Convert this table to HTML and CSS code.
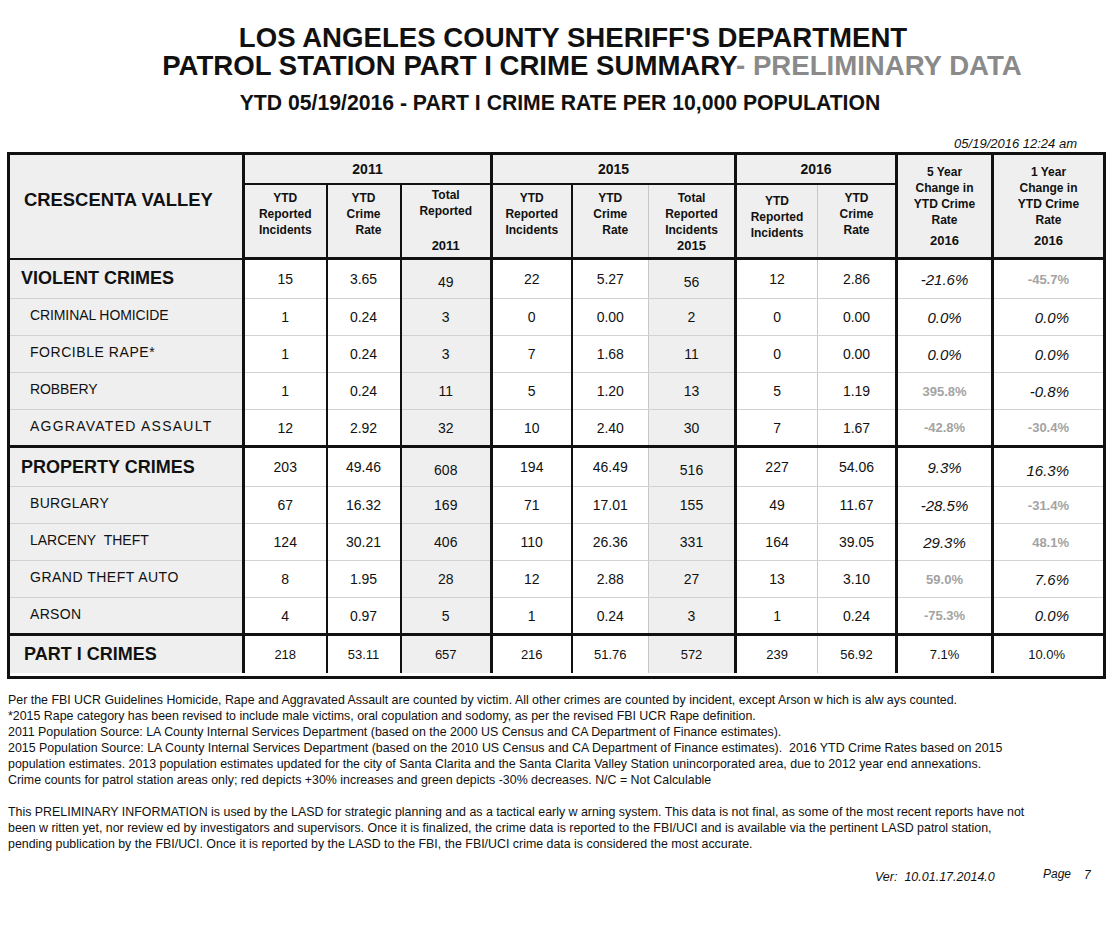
FILE: index.html
```html
<!DOCTYPE html>
<html>
<head>
<meta charset="utf-8">
<link rel="stylesheet" href="styles.css">
</head>
<body>
<div class="page">
  <div class="titles">
    <div class="t1">LOS ANGELES COUNTY SHERIFF'S DEPARTMENT</div>
    <div class="t2">PATROL STATION PART I CRIME SUMMARY<span class="prelim">- PRELIMINARY DATA</span></div>
    <div class="t3">YTD 05/19/2016 - PART I CRIME RATE PER 10,000 POPULATION</div>
  </div>
  <div class="stamp">05/19/2016 12:24 am</div>
  <table class="crime">
    <colgroup>
      <col class="c-label"><col class="c-a"><col class="c-b"><col class="c-c">
      <col class="c-d"><col class="c-e"><col class="c-f">
      <col class="c-g"><col class="c-h">
      <col class="c-i"><col class="c-j">
    </colgroup>
    <thead>
      <tr class="hr1">
        <th rowspan="2" class="station">CRESCENTA VALLEY</th>
        <th colspan="3" class="yr thick-r">2011</th>
        <th colspan="3" class="yr thick-r">2015</th>
        <th colspan="2" class="yr thick-r">2016</th>
        <th rowspan="2" class="chg thick-r"><span class="l">5 Year</span><span class="l">Change in</span><span class="l">YTD Crime</span><span class="l">Rate</span><span class="y">2016</span></th>
        <th rowspan="2" class="chg chg1"><span class="l">1 Year</span><span class="l">Change in</span><span class="l">YTD Crime</span><span class="l">Rate</span><span class="y">2016</span></th>
      </tr>
      <tr class="hr2">
        <th class="sub bl"><span class="l">YTD</span><span class="l">Reported</span><span class="l">Incidents</span></th>
        <th class="sub bl"><span class="l">YTD</span><span class="l">Crime</span><span class="l rt">Rate</span></th>
        <th class="sub tot thick-r"><span class="l">Total</span><span class="l">Reported</span><span class="y gap">2011</span></th>
        <th class="sub bl"><span class="l">YTD</span><span class="l">Reported</span><span class="l">Incidents</span></th>
        <th class="sub gl"><span class="l">YTD</span><span class="l">Crime</span><span class="l rt">Rate</span></th>
        <th class="sub tot2 thick-r"><span class="l">Total</span><span class="l">Reported</span><span class="l">Incidents</span><span class="y">2015</span></th>
        <th class="sub s16 gl"><span class="l">YTD</span><span class="l">Reported</span><span class="l">Incidents</span></th>
        <th class="sub thick-r"><span class="l">YTD</span><span class="l">Crime</span><span class="l">Rate</span></th>
      </tr>
    </thead>
    <tbody class="grp">
      <tr class="main">
        <td class="lbl big">VIOLENT CRIMES</td>
        <td class="n bl">15</td><td class="n bl">3.65</td><td class="n sh thick-r low">49</td>
        <td class="n bl">22</td><td class="n gl">5.27</td><td class="n sh thick-r low">56</td>
        <td class="n gl">12</td><td class="n thick-r">2.86</td>
        <td class="p thick-r">-21.6%</td><td class="p1 dim">-45.7%</td>
      </tr>
      <tr>
        <td class="lbl sm">CRIMINAL HOMICIDE</td>
        <td class="n bl">1</td><td class="n bl">0.24</td><td class="n sh thick-r">3</td>
        <td class="n bl">0</td><td class="n gl">0.00</td><td class="n sh thick-r">2</td>
        <td class="n gl">0</td><td class="n thick-r">0.00</td>
        <td class="p thick-r">0.0%</td><td class="p1">0.0%</td>
      </tr>
      <tr>
        <td class="lbl sm ls-rape">FORCIBLE RAPE*</td>
        <td class="n bl">1</td><td class="n bl">0.24</td><td class="n sh thick-r">3</td>
        <td class="n bl">7</td><td class="n gl">1.68</td><td class="n sh thick-r">11</td>
        <td class="n gl">0</td><td class="n thick-r">0.00</td>
        <td class="p thick-r">0.0%</td><td class="p1">0.0%</td>
      </tr>
      <tr>
        <td class="lbl sm">ROBBERY</td>
        <td class="n bl">1</td><td class="n bl">0.24</td><td class="n sh thick-r">11</td>
        <td class="n bl">5</td><td class="n gl">1.20</td><td class="n sh thick-r">13</td>
        <td class="n gl">5</td><td class="n thick-r">1.19</td>
        <td class="p thick-r dim">395.8%</td><td class="p1">-0.8%</td>
      </tr>
      <tr class="last">
        <td class="lbl sm ls-agg">AGGRAVATED ASSAULT</td>
        <td class="n bl">12</td><td class="n bl">2.92</td><td class="n sh thick-r">32</td>
        <td class="n bl">10</td><td class="n gl">2.40</td><td class="n sh thick-r">30</td>
        <td class="n gl">7</td><td class="n thick-r">1.67</td>
        <td class="p thick-r dim">-42.8%</td><td class="p1 dim">-30.4%</td>
      </tr>
    </tbody>
    <tbody class="grp">
      <tr class="main">
        <td class="lbl big">PROPERTY CRIMES</td>
        <td class="n bl">203</td><td class="n bl">49.46</td><td class="n sh thick-r low">608</td>
        <td class="n bl">194</td><td class="n gl">46.49</td><td class="n sh thick-r low">516</td>
        <td class="n gl">227</td><td class="n thick-r">54.06</td>
        <td class="p thick-r">9.3%</td><td class="p1 low">16.3%</td>
      </tr>
      <tr>
        <td class="lbl sm ls-burg">BURGLARY</td>
        <td class="n bl">67</td><td class="n bl">16.32</td><td class="n sh thick-r">169</td>
        <td class="n bl">71</td><td class="n gl">17.01</td><td class="n sh thick-r">155</td>
        <td class="n gl">49</td><td class="n thick-r">11.67</td>
        <td class="p thick-r">-28.5%</td><td class="p1 dim">-31.4%</td>
      </tr>
      <tr>
        <td class="lbl sm ls-lar">LARCENY&nbsp; THEFT</td>
        <td class="n bl">124</td><td class="n bl">30.21</td><td class="n sh thick-r">406</td>
        <td class="n bl">110</td><td class="n gl">26.36</td><td class="n sh thick-r">331</td>
        <td class="n gl">164</td><td class="n thick-r">39.05</td>
        <td class="p thick-r">29.3%</td><td class="p1 dim">48.1%</td>
      </tr>
      <tr>
        <td class="lbl sm ls-gta">GRAND THEFT AUTO</td>
        <td class="n bl">8</td><td class="n bl">1.95</td><td class="n sh thick-r">28</td>
        <td class="n bl">12</td><td class="n gl">2.88</td><td class="n sh thick-r">27</td>
        <td class="n gl">13</td><td class="n thick-r">3.10</td>
        <td class="p thick-r dim">59.0%</td><td class="p1">7.6%</td>
      </tr>
      <tr class="last">
        <td class="lbl sm ls-ars">ARSON</td>
        <td class="n bl">4</td><td class="n bl">0.97</td><td class="n sh thick-r">5</td>
        <td class="n bl">1</td><td class="n gl">0.24</td><td class="n sh thick-r">3</td>
        <td class="n gl">1</td><td class="n thick-r">0.24</td>
        <td class="p thick-r dim">-75.3%</td><td class="p1">0.0%</td>
      </tr>
    </tbody>
    <tbody class="total">
      <tr class="tot-row">
        <td class="lbl big">PART I CRIMES</td>
        <td class="t bl">218</td><td class="t bl">53.11</td><td class="t sh thick-r">657</td>
        <td class="t bl">216</td><td class="t gl">51.76</td><td class="t sh thick-r">572</td>
        <td class="t gl">239</td><td class="t thick-r">56.92</td>
        <td class="t thick-r">7.1%</td><td class="t p1t">10.0%</td>
      </tr>
      <tr class="spacer"><td colspan="11"></td></tr>
    </tbody>
  </table>
  <div class="notes">
    <p>Per the FBI UCR Guidelines Homicide, Rape and Aggravated Assault are counted by victim. All other crimes are counted by incident, except Arson w hich is alw ays counted.</p>
    <p>*2015 Rape category has been revised to include male victims, oral copulation and sodomy, as per the revised FBI UCR Rape definition.</p>
    <p>2011 Population Source: LA County Internal Services Department (based on the 2000 US Census and CA Department of Finance estimates).</p>
    <p>2015 Population Source: LA County Internal Services Department (based on the 2010 US Census and CA Department of Finance estimates).&nbsp; 2016 YTD Crime Rates based on 2015</p>
    <p>population estimates. 2013 population estimates updated for the city of Santa Clarita and the Santa Clarita Valley Station unincorporated area, due to 2012 year end annexations.</p>
    <p>Crime counts for patrol station areas only; red depicts +30% increases and green depicts -30% decreases. N/C = Not Calculable</p>
  </div>
  <div class="notes notes2">
    <p>This PRELIMINARY INFORMATION is used by the LASD for strategic planning and as a tactical early w arning system. This data is not final, as some of the most recent reports have not</p>
    <p>been w ritten yet, nor review ed by investigators and supervisors. Once it is finalized, the crime data is reported to the FBI/UCI and is available via the pertinent LASD patrol station,</p>
    <p>pending publication by the FBI/UCI. Once it is reported by the LASD to the FBI, the FBI/UCI crime data is considered the most accurate.</p>
  </div>
  <div class="foot">
    <span class="ver">Ver:&nbsp; 10.01.17.2014.0</span>
    <span class="pg">Page</span>
    <span class="pgn">7</span>
  </div>
</div>
</body>
</html>
```
FILE: styles.css
```css
* { box-sizing: border-box; }
html, body { margin: 0; padding: 0; background: #fff; }
body { font-family: "Liberation Sans", Arial, sans-serif; color: #111; }
.page { width: 1120px; height: 927px; position: relative; }

.titles { text-align: center; padding-top: 24px; }
.t1 { font-size: 27.6px; font-weight: bold; line-height: 28px; padding-left: 26px; }
.t2 { font-size: 27.6px; font-weight: bold; line-height: 28px; padding-left: 64px; }
.t2 .prelim { color: #8a8a8a; }
.t3 { font-size: 21.2px; font-weight: bold; line-height: 24px; margin-top: 11px; }

.stamp { text-align: right; font-size: 13px; font-style: italic; line-height: 14px; padding-right: 43px; margin-top: 22px; }

.crime { margin-left: 7px; margin-top: 1px; width: 1098px; table-layout: fixed; border-collapse: collapse; border: 3px solid #111; }
.c-label { width: 235px; } .c-a { width: 83px; } .c-b { width: 74px; } .c-c { width: 91px; }
.c-d { width: 80px; } .c-e { width: 77px; } .c-f { width: 87px; }
.c-g { width: 82px; } .c-h { width: 79px; }
.c-i { width: 96px; } .c-j { width: 112px; }

.crime th { background: #efefef; font-weight: bold; padding: 0; vertical-align: top; text-align: center; }
.crime th .l { display: block; font-size: 12px; line-height: 16px; }
.crime th .l.rt { padding-left: 10px; }
.crime th .y { display: block; font-size: 13px; line-height: 16px; }
.hr1 th { height: 30px; border-bottom: 2px solid #111; }
.hr1 th.yr { font-size: 14px; vertical-align: middle; }
.hr2 th { height: 75px; border-bottom: 3px solid #111; }
.station { font-size: 18.4px; text-align: left !important; padding: 34px 0 0 14px !important; line-height: 22px; border-right: 3px solid #111; border-bottom: 3px solid #111; }
.chg { padding-top: 9px !important; border-bottom: 3px solid #111 !important; }
.chg .y { margin-top: 5px; }
.sub { padding-top: 5px !important; }
.sub.tot { padding-top: 2px !important; }
.sub.tot .y.gap { margin-top: 19px; }
.sub.s16 { padding-top: 8px !important; }

.thick-r { border-right: 3px solid #111; }
.bl { border-right: 2px solid #111; }
.gl { border-right: 1px solid #c8c8c8; }

.crime td { height: 37px; padding: 0; text-align: center; vertical-align: middle; border-bottom: 1px solid #d2d2d2; background: #fff; }
.crime tr.main td { height: 40px; }
.crime tr.last td { border-bottom: 3px solid #111; }
.crime .lbl { background: #efefef; text-align: left; border-right: 3px solid #111; }
.lbl.big { font-size: 18px; font-weight: bold; padding-left: 11px; }
.lbl.sm { font-size: 14px; padding-left: 20px; letter-spacing: -0.1px; padding-bottom: 4px; }
.lbl.ls-agg { letter-spacing: 1.25px; }
.lbl.ls-gta { letter-spacing: 0.5px; }
.lbl.ls-rape { letter-spacing: 0.55px; }
.lbl.ls-lar { letter-spacing: 0px; }
.lbl.ls-burg { letter-spacing: 0.3px; }
.lbl.ls-ars { letter-spacing: 0.3px; }
.n { font-size: 14px; }
.sh { background: #efefef !important; }
.low { padding-top: 6px !important; }
.p { font-size: 15px; font-style: italic; }
.p1 { font-size: 15px; font-style: italic; text-align: right !important; padding-right: 34px !important; }
.dim { color: #a3a3a3; font-weight: bold; font-style: normal; font-size: 13px; }
.t { font-size: 13px; }
.crime .tot-row td { height: 38px; border-bottom: none; }
.crime .tot-row td.lbl { padding-left: 14px; }
.p1t { text-align: right !important; padding-right: 38px !important; }
.crime .spacer td { height: 5px; border: none; background: #fff; }

.notes { margin-top: 13px; padding-left: 8px; font-size: 12.4px; line-height: 16px; }
.notes p { margin: 0; white-space: nowrap; }
.notes2 { margin-top: 16px; }

.foot { position: absolute; top: 867px; left: 0; width: 1120px; font-style: italic; font-size: 12px; }
.foot .ver { position: absolute; left: 875px; top: 3px; font-size: 12.5px; }
.foot .pg { position: absolute; left: 1043px; top: 0; }
.foot .pgn { position: absolute; left: 1084px; top: 1px; }
```
